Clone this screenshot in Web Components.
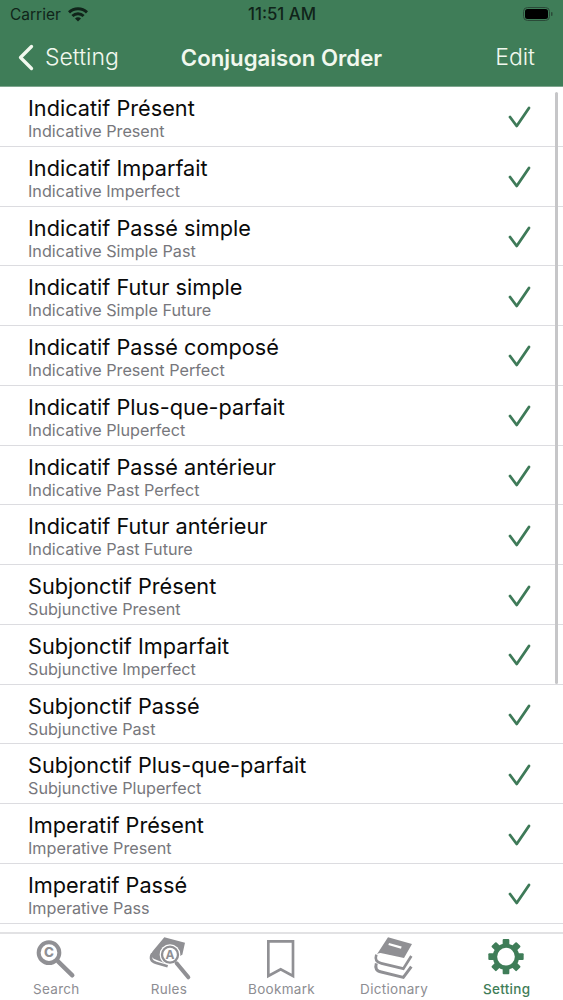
<!DOCTYPE html>
<html>
<head>
<meta charset="utf-8">
<style>
html,body{margin:0;padding:0;background:#fff;}
body{font-family:Inter,"Liberation Sans",sans-serif;}
</style>
</head>
<body>
<order-screen></order-screen>
<script>
class StatusBar extends HTMLElement {
    constructor(){
        super()
        this.attachShadow({mode:"open"}).innerHTML = `
        <style>
        :host{display:grid;grid-template-columns:1fr auto 1fr;align-items:center;height:28px;padding:0 9px 0 10px;color:#10241a;font-size:15.500px;}
        .left{display:flex;align-items:center;gap:7px;}
        .time{font-weight:500;font-size:16.800px;}
        .right{display:flex;justify-content:flex-end;}
        </style>
        <div class="left"><span>Carrier</span>
            <svg width="20" height="15" viewBox="0 0 20 15"><path d="M1 5.400a13 13 0 0 1 18 0" fill="none" stroke="#10241a" stroke-width="3"/><path d="M4.400 9a8.200 8.200 0 0 1 11.200 0" fill="none" stroke="#10241a" stroke-width="3"/><path d="M7 11.500 10 14.500l3-3a4.200 4.200 0 0 0-6 0z" fill="#10241a"/></svg>
        </div>
        <div class="time">11:51 AM</div>
        <div class="right">
            <svg width="32" height="16" viewBox="0 0 32 16"><rect x="1.500" y="1.500" width="26" height="13" rx="4" fill="none" stroke="#2a4a38" stroke-width="1"/><rect x="3" y="3" width="23" height="10" rx="2.500" fill="#000"/><rect x="29" y="6" width="1.500" height="4" rx=".7" fill="#2a4a38"/></svg>
        </div>`;
    }
}
customElements.define("status-bar", StatusBar);

class NavBar extends HTMLElement {
    constructor(){
        super()
        this.attachShadow({mode:"open"}).innerHTML = `
        <style>
        :host{display:block;background:#3f7d58;color:#f1f8ee;border-bottom:1px solid #7fa68f;}
        .bar{display:grid;grid-template-columns:1fr auto 1fr;align-items:center;height:58px;padding:0 28px;font-size:23px;}
        .back{display:flex;align-items:center;gap:11px;font-weight:300;margin-left:-11px;}
        .title{font-weight:600;font-size:22.200px;}
        .edit{text-align:right;font-weight:300;}
        svg{display:block;}
        </style>
        <status-bar></status-bar>
        <div class="bar">
            <div class="back">
                <svg width="17" height="27" viewBox="0 0 17 27"><path d="M14.500 2.500 3.500 13.500l11 11" fill="none" stroke="#f1f8ee" stroke-width="3.300" stroke-linecap="round" stroke-linejoin="round"/></svg>
                <span>Setting</span>
            </div>
            <div class="title">Conjugaison Order</div>
            <div class="edit">Edit</div>
        </div>`;
    }
}
customElements.define("nav-bar", NavBar);

class ConjRow extends HTMLElement {
    constructor(){
        super()
        this.attachShadow({mode:"open"}).innerHTML = `
        <style>
        :host{display:flex;align-items:center;box-sizing:border-box;height:59.770px;padding:8px 32px 0 28px;border-bottom:1px solid #dcdce0;}
        .text{flex:1;display:flex;flex-direction:column;align-self:flex-start;}
        .name{font-size:21.700px;line-height:27px;color:#0a0a0a;}
        .sub{font-size:16.200px;line-height:19px;color:#77777c;}
        svg{display:block;margin-top:-6px;}
        </style>
        <div class="text">
            <div class="name"><slot name="name"></slot></div>
            <div class="sub"><slot name="sub"></slot></div>
        </div>
        <svg width="24" height="24" viewBox="0 0 24 24"><path d="M3 12 9.700 21 22 3" fill="none" stroke="#3e7a58" stroke-width="2.800" stroke-linecap="round" stroke-linejoin="round"/></svg>`;
    }
}
customElements.define("conj-row", ConjRow);

class TabItem extends HTMLElement {
    constructor(){
        super()
        this.attachShadow({mode:"open"}).innerHTML = `
        <style>
        :host{flex:1;display:flex;flex-direction:column;align-items:center;color:#8d8d92;font-size:13.500px;letter-spacing:.3px;}
        :host([active]){color:#3f7d58;font-weight:500;}
        .icon{flex:none;height:48px;}
        .label{flex:none;line-height:17px;margin-top:-1px;}
        ::slotted(svg){display:block;}
        </style>
        <div class="icon"><slot name="icon"></slot></div>
        <div class="label"><slot></slot></div>`;
    }
}
customElements.define("tab-item", TabItem);

class TabBar extends HTMLElement {
    constructor(){
        super()
        this.attachShadow({mode:"open"}).innerHTML = `
        <style>
        :host{display:flex;box-sizing:border-box;height:68px;border-top:2px solid #e2e2e4;background:#fff;}
        </style>
        <slot></slot>`;
    }
}
customElements.define("tab-bar", TabBar);

const rows = [
    ["Indicatif Présent","Indicative Present"],
    ["Indicatif Imparfait","Indicative Imperfect"],
    ["Indicatif Passé simple","Indicative Simple Past"],
    ["Indicatif Futur simple","Indicative Simple Future"],
    ["Indicatif Passé composé","Indicative Present Perfect"],
    ["Indicatif Plus-que-parfait","Indicative Pluperfect"],
    ["Indicatif Passé antérieur","Indicative Past Perfect"],
    ["Indicatif Futur antérieur","Indicative Past Future"],
    ["Subjonctif Présent","Subjunctive Present"],
    ["Subjonctif Imparfait","Subjunctive Imperfect"],
    ["Subjonctif Passé","Subjunctive Past"],
    ["Subjonctif Plus-que-parfait","Subjunctive Pluperfect"],
    ["Imperatif Présent","Imperative Present"],
    ["Imperatif Passé","Imperative Pass"]
];

const gray = "#909094";
const green = "#3f7d58";
// 150x144 viewBoxes, 3 units per pixel
const svgOpen = x => `<svg slot="icon" width="50" height="48" viewBox="${x} 0 150 144">`;
const gearTeeth = [0,45,90,135,180,225,270,315].map(a => `<rect x="64" y="15" width="20" height="20" rx="3" transform="rotate(${a} 74 68)"/>`).join("");
const icons = {
    search:`${svgOpen(4)}<circle cx="58" cy="56" r="31" fill="none" stroke="${gray}" stroke-width="12"/><text x="58" y="70" font-family="Inter,sans-serif" font-size="40" font-weight="800" text-anchor="middle" fill="${gray}">C</text><path d="M85 82l43 42" stroke="${gray}" stroke-width="13" stroke-linecap="round"/></svg>`,
    rules:`${svgOpen(-3)}<path d="M58 10 120 26 112 62 60 88 26 74Q12 62 26 48z" fill="${gray}"/><path d="M22 58Q10 80 34 87L68 97" fill="none" stroke="${gray}" stroke-width="8"/><circle cx="75" cy="62" r="31" fill="#fff"/><circle cx="75" cy="62" r="24" fill="#fff" stroke="${gray}" stroke-width="7"/><text x="75" y="75" font-family="Inter,sans-serif" font-size="36" font-weight="700" text-anchor="middle" fill="${gray}">A</text><path d="M95 88l35 42" stroke="${gray}" stroke-width="12" stroke-linecap="round"/></svg>`,
    bookmark:`${svgOpen(-3)}<path d="M34 22H108V126L71 106 34 126z" fill="none" stroke="${gray}" stroke-width="8"/></svg>`,
    dict:`${svgOpen(3)}<path d="M60 10 132 30 108 72 38 57Q26 58 22 68z" fill="${gray}"/><path d="M62 30 100 41" stroke="#fff" stroke-width="7"/><path d="M25 62Q18 84 40 88L106 104 130 66" fill="none" stroke="${gray}" stroke-width="8"/><path d="M25 88Q18 110 40 114L106 130 130 98" fill="none" stroke="${gray}" stroke-width="9"/></svg>`,
    gear:`${svgOpen(2)}<circle cx="74" cy="68" r="33" fill="none" stroke="${green}" stroke-width="13"/><g fill="${green}">${gearTeeth}</g></svg>`
};

class OrderScreen extends HTMLElement {
    constructor(){
        super()
        this.attachShadow({mode:"open"}).innerHTML = `
        <style>
        :host{display:flex;flex-direction:column;height:1000px;overflow:hidden;background:#fff;}
        .list{position:relative;flex:1;min-height:0;overflow:hidden;}
        .scroll{position:absolute;top:5px;right:5px;width:3px;height:592px;border-radius:2px;background:#c6c6c8;}
        </style>
        <nav-bar></nav-bar>
        <div class="list">
            ${rows.map(r => `<conj-row><span slot="name">${r[0]}</span><span slot="sub">${r[1]}</span></conj-row>`).join("")}
            <div class="scroll"></div>
        </div>
        <tab-bar>
            <tab-item>${icons.search}Search</tab-item>
            <tab-item>${icons.rules}Rules</tab-item>
            <tab-item>${icons.bookmark}Bookmark</tab-item>
            <tab-item>${icons.dict}Dictionary</tab-item>
            <tab-item active>${icons.gear}Setting</tab-item>
        </tab-bar>`;
    }
}
customElements.define("order-screen", OrderScreen);
</script>
</body>
</html>
